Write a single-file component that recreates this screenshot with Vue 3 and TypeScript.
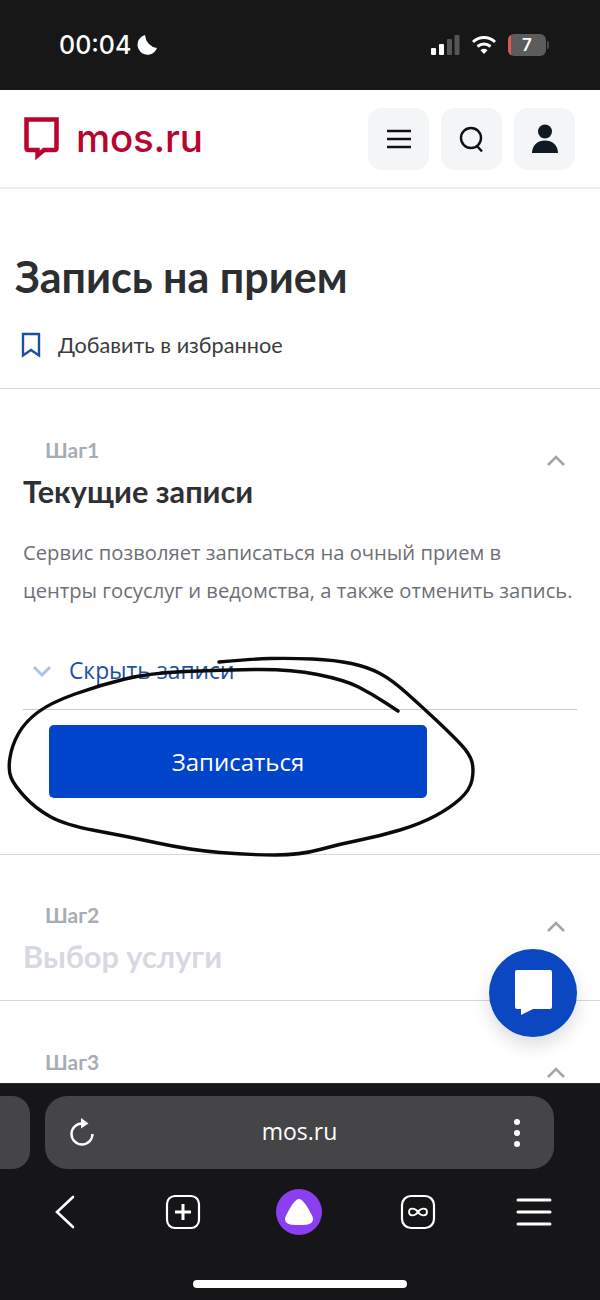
<script setup lang="ts">
// рукописная обводка вокруг кнопки
const strokePoints: [number, number][] = [
  [219, 662], [250, 659], [290, 658], [335, 660], [368, 667], [392, 680], [420, 705], [450, 733],
  [470, 754], [474, 770], [470, 790], [450, 808], [420, 824], [380, 836], [340, 844], [300, 855],
  [250, 855], [190, 850], [125, 836], [65, 825], [35, 808], [14, 785], [8, 770], [12, 745],
  [25, 722], [50, 703], [100, 685], [150, 673], [220, 670], [290, 669], [345, 680], [372, 694], [398, 711]
]

const buildStroke = (pts: [number, number][]) => {
  let d = `M${pts[0][0]} ${pts[0][1]}`
  for (let i = 1; i < pts.length - 1; i++) {
    const mx = (pts[i][0] + pts[i + 1][0]) / 2
    const my = (pts[i][1] + pts[i + 1][1]) / 2
    d += ` Q${pts[i][0]} ${pts[i][1]} ${mx} ${my}`
  }
  const last = pts[pts.length - 1]
  return `${d} L${last[0]} ${last[1]}`
}

const strokePath = buildStroke(strokePoints)
</script>

<template>
  <div class="screen">
    <div class="status-bar">
      <div class="status-left">
        <span class="clock">00:04</span>
        <svg class="moon" width="22" height="22" viewBox="0 0 22 22">
          <path d="M9 1 A10 10 0 1 0 21 14 A14 14 0 0 1 9 1Z" fill="#fff" />
        </svg>
      </div>
      <div class="status-right">
        <svg width="30" height="22" viewBox="0 0 30 22">
          <rect x="1" y="14" width="5" height="7" rx="1" fill="#fff" />
          <rect x="9" y="10" width="5" height="11" rx="1" fill="#fff" />
          <rect x="17" y="5" width="5" height="16" rx="1" fill="#555" />
          <rect x="24.500" y="1" width="5" height="20" rx="1" fill="#555" />
        </svg>
        <svg class="wifi" width="26" height="20" viewBox="0 0 26 20" fill="none" stroke="#fff" stroke-width="3">
          <path d="M2 7 A16 16 0 0 1 24 7" />
          <path d="M6.500 11.500 A10 10 0 0 1 19.500 11.500" />
          <path d="M13 19 L9.500 15.300 A5 5 0 0 1 16.500 15.300Z" fill="#fff" stroke="none" />
        </svg>
        <div class="battery">
          <span class="battery-level"></span>
          <span class="battery-num">7</span>
        </div>
        <span class="battery-tip"></span>
      </div>
    </div>

    <header class="site-header">
      <div class="logo">
        <svg width="35" height="44" viewBox="0 0 35 44">
          <path d="M2.500 2.500 H32.500 V31 Q32.500 33 30.500 33 H20 L13.500 38.500 V33 H4.500 Q2.500 33 2.500 31Z" fill="none" stroke="#b9042f" stroke-width="4.500" stroke-linejoin="miter" />
        </svg>
        <span class="logo-text">mos.ru</span>
      </div>
      <div class="header-actions">
        <button class="icon-btn">
          <svg width="26" height="22" viewBox="0 0 26 22" stroke="#111" stroke-width="2.600">
            <path d="M1 3 H25 M1 11 H25 M1 19 H25" />
          </svg>
        </button>
        <button class="icon-btn">
          <svg width="26" height="28" viewBox="0 0 26 28" fill="none" stroke="#111" stroke-width="2.400">
            <circle cx="12" cy="13" r="10" />
            <path d="M18 21 L23 26.500" />
          </svg>
        </button>
        <button class="icon-btn">
          <svg width="28" height="30" viewBox="0 0 28 30" fill="#111a24">
            <circle cx="14" cy="7.500" r="7" />
            <path d="M1 29 C1 21 7 16.500 14 16.500 C21 16.500 27 21 27 29Z" />
          </svg>
        </button>
      </div>
    </header>

    <main class="page">
      <h1 class="page-title">Запись на прием</h1>
      <div class="favorite">
        <svg width="20" height="26" viewBox="0 0 20 26" fill="none" stroke="#1d4f9f" stroke-width="2.400">
          <path d="M2 2 H18 V23.500 L10 18 L2 23.500Z" />
        </svg>
        <span>Добавить в избранное</span>
      </div>

      <section class="step step-first">
        <div class="step-label">Шаг1</div>
        <svg class="chevron" width="20" height="12" viewBox="0 0 20 12" fill="none" stroke="#a3a6aa" stroke-width="2.600">
          <path d="M2 11 L10 3 L18 11" />
        </svg>
        <h2 class="step-title">Текущие записи</h2>
        <p class="step-text">Сервис позволяет записаться на очный прием в<br />центры госуслуг и ведомства, а также отменить запись.</p>
        <div class="toggle">
          <svg width="20" height="12" viewBox="0 0 20 12" fill="none" stroke="#a9c3ea" stroke-width="3">
            <path d="M2 2 L10 10 L18 2" />
          </svg>
          <span>Скрыть записи</span>
        </div>
        <div class="records">
          <button class="primary">Записаться</button>
        </div>
      </section>

      <section class="step step-second">
        <div class="step-label">Шаг2</div>
        <svg class="chevron" width="20" height="12" viewBox="0 0 20 12" fill="none" stroke="#a3a6aa" stroke-width="2.600">
          <path d="M2 11 L10 3 L18 11" />
        </svg>
        <h2 class="step-title muted">Выбор услуги</h2>
      </section>

      <section class="step step-third">
        <div class="step-label">Шаг3</div>
        <svg class="chevron" width="20" height="12" viewBox="0 0 20 12" fill="none" stroke="#a3a6aa" stroke-width="2.600">
          <path d="M2 11 L10 3 L18 11" />
        </svg>
      </section>
    </main>

    <div class="browser-bar">
      <div class="url-row">
        <div class="prev-tab"></div>
        <div class="url-field">
          <svg width="28" height="32" viewBox="0 0 28 32" fill="none" stroke="#fff" stroke-width="2.400">
            <path d="M14 6.500 A10.500 10.500 0 1 0 24.500 17" />
            <path d="M13 1 L20.500 6.500 L13 11.500Z" fill="#fff" stroke="none" />
          </svg>
          <span class="url-text">mos.ru</span>
          <svg width="8" height="30" viewBox="0 0 8 30" fill="#fff">
            <circle cx="4" cy="4" r="3" />
            <circle cx="4" cy="15" r="3" />
            <circle cx="4" cy="26" r="3" />
          </svg>
        </div>
      </div>
      <nav class="browser-nav">
        <svg width="20" height="34" viewBox="0 0 20 34" fill="none" stroke="#fff" stroke-width="2.600" stroke-linecap="round">
          <path d="M18 2 L2 17 L18 32" />
        </svg>
        <svg class="nav-plus" width="36" height="36" viewBox="0 0 36 36" fill="none" stroke="#fff">
          <rect x="2" y="2" width="32" height="32" rx="8" stroke-width="2.200" />
          <path d="M18 10 V26 M10 18 H26" stroke-width="3" />
        </svg>
        <div class="alice">
          <svg width="30" height="26" viewBox="0 0 30 26" fill="#fff">
            <path d="M15 0 C18 0 21 4 25 11 C29 18 30 20 28 23 C26 26 20 26 15 26 C10 26 4 26 2 23 C0 20 1 18 5 11 C9 4 12 0 15 0Z" />
          </svg>
        </div>
        <svg class="nav-loop" width="36" height="36" viewBox="0 0 36 36" fill="none" stroke="#fff">
          <rect x="2" y="2" width="32" height="32" rx="9" stroke-width="2.200" />
          <path d="M18 18 C15 13.500 9 13.500 9 18 C9 22.500 15 22.500 18 18 C21 13.500 27 13.500 27 18 C27 22.500 21 22.500 18 18Z" stroke-width="1.800" />
        </svg>
        <svg class="nav-menu" width="36" height="28" viewBox="0 0 36 28" stroke="#fff" stroke-width="3" stroke-linecap="round">
          <path d="M2 2 H34 M2 14 H34 M2 26 H34" />
        </svg>
      </nav>
      <div class="home-indicator"></div>
    </div>

    <button class="chat-fab">
      <svg width="37" height="45" viewBox="0 0 37 45" fill="#fff">
        <path d="M2 0 H35 A2 2 0 0 1 37 2 V37 A2 2 0 0 1 35 39 H18 L6 45 V39 H2 A2 2 0 0 1 0 37 V2 A2 2 0 0 1 2 0Z" />
      </svg>
    </button>

    <svg class="scribble" width="600" height="1300" viewBox="0 0 600 1300" fill="none">
      <path :d="strokePath" stroke="#0b0b0b" stroke-width="3.400" stroke-linecap="round" stroke-linejoin="round" />
    </svg>
  </div>
</template>

<style scoped>
.screen {
  position: relative;
  display: flex;
  flex-direction: column;
  width: 600px;
  height: 1300px;
  overflow: hidden;
  background: #fff;
  font-family: Lato, "Open Sans", "Noto Sans", sans-serif;
}

.status-bar {
  flex: none;
  display: flex;
  justify-content: space-between;
  align-items: center;
  height: 90px;
  padding: 0 51px 0 59px;
  box-sizing: border-box;
  background: #171717;
  color: #fff;
}

.status-left {
  display: flex;
  align-items: center;
  gap: 5px;
}

.clock {
  font-family: Inter, Roboto, sans-serif;
  font-size: 25px;
  font-weight: 500;
}

.status-right {
  display: flex;
  align-items: center;
}

.wifi {
  margin-left: 11px;
}

.battery {
  position: relative;
  width: 38px;
  height: 22px;
  margin-left: 11px;
  border-radius: 6px;
  overflow: hidden;
  background: #5c5c5c;
  text-align: center;
  font-family: Inter, Roboto, sans-serif;
  font-size: 17px;
  font-weight: 600;
  line-height: 22px;
}

.battery-level {
  position: absolute;
  left: 0;
  top: 0;
  width: 3px;
  height: 100%;
  background: #e2544c;
}

.battery-num {
  position: relative;
}

.battery-tip {
  width: 2px;
  height: 8px;
  margin-left: 1px;
  border-radius: 0 2px 2px 0;
  background: #4a4a4a;
}

.site-header {
  flex: none;
  display: flex;
  justify-content: space-between;
  align-items: center;
  height: 99px;
  padding: 0 25px 0 24px;
  box-sizing: border-box;
  border-bottom: 2px solid #eceef0;
}

.logo {
  display: flex;
  align-items: center;
  gap: 17px;
}

.logo-text {
  font-family: Inter, Roboto, sans-serif;
  font-size: 38.500px;
  font-weight: 500;
  color: #b9042f;
  line-height: 1;
  letter-spacing: -0.2px;
}

.header-actions {
  display: flex;
  gap: 12px;
}

.icon-btn {
  display: flex;
  align-items: center;
  justify-content: center;
  width: 61px;
  height: 62px;
  padding: 0;
  border: 0;
  border-radius: 14px;
  background: #f4f5f7;
}

.page {
  flex: 1;
  min-height: 0;
  overflow: hidden;
}

.page-title {
  margin: 62px 0 0 15px;
  font-size: 43px;
  font-weight: 700;
  line-height: 52px;
  color: #2d2e31;
}

.favorite {
  display: flex;
  align-items: center;
  gap: 17px;
  margin: 28px 0 0 21px;
  font-size: 21.700px;
  line-height: 28px;
  color: #3a3c40;
}

.step {
  position: relative;
  padding: 0 23px;
  border-top: 1px solid #d5d7da;
}

.step-first {
  margin-top: 29px;
  padding-top: 48px;
}

.step-second {
  padding-top: 47px;
  padding-bottom: 24px;
}

.step-third {
  padding-top: 48px;
}

.step-label {
  padding-left: 22px;
  font-size: 21px;
  font-weight: 700;
  line-height: 26px;
  color: #a8acb3;
}

.chevron {
  position: absolute;
  right: 34px;
  top: 65px;
}

.step-third .chevron {
  top: 65px;
}

.step-title {
  margin: 10px 0 0;
  font-size: 30.700px;
  font-weight: 700;
  line-height: 38px;
  color: #2f3033;
}

.step-title.muted {
  margin-top: 10px;
  color: #d6d9df;
}

.step-text {
  margin: 22px 0 0;
  font-family: "Open Sans", "Noto Sans", sans-serif;
  font-size: 20.200px;
  line-height: 38px;
  white-space: nowrap;
  color: #6d7075;
}

.toggle {
  display: flex;
  align-items: center;
  gap: 17px;
  margin: 40px 0 0 9px;
  font-family: "Open Sans", "Noto Sans", sans-serif;
  font-size: 22.800px;
  line-height: 44px;
  color: #1f4fa3;
}

.records {
  margin-top: 16px;
  padding: 15px 150px 56px 26px;
  border-top: 1px solid #c9cbce;
}

.primary {
  display: block;
  width: 378px;
  height: 73px;
  border: 0;
  border-radius: 5px;
  background: #0044cc;
  font-family: "Open Sans", "Noto Sans", sans-serif;
  font-size: 24px;
  color: #fff;
}

.browser-bar {
  flex: none;
  position: relative;
  height: 217px;
  border-top: 1px solid #2c2c2c;
  background: #161618;
  box-sizing: border-box;
}

.url-row {
  display: flex;
  gap: 15px;
  margin-top: 12px;
  margin-right: 46px;
}

.prev-tab {
  width: 30px;
  height: 73px;
  border-radius: 0 18px 18px 0;
  background: #454547;
}

.url-field {
  flex: 1;
  display: flex;
  align-items: center;
  justify-content: space-between;
  height: 73px;
  padding: 0 33px 0 23px;
  border-radius: 22px;
  box-sizing: border-box;
  background: #454547;
}

.url-text {
  margin: 0 10px 4px 0;
  font-family: "Open Sans", "Noto Sans", sans-serif;
  font-size: 23px;
  color: #fff;
}

.browser-nav {
  display: flex;
  align-items: center;
  margin-top: 20px;
  padding-left: 55px;
}

.nav-plus {
  margin-left: 90px;
}

.alice {
  display: flex;
  align-items: center;
  justify-content: center;
  width: 46px;
  height: 46px;
  margin-left: 75px;
  border-radius: 50%;
  background: #8a3ff0;
}

.nav-loop {
  margin-left: 78px;
}

.nav-menu {
  margin-left: 80px;
}

.home-indicator {
  position: absolute;
  left: 193px;
  top: 196px;
  width: 214px;
  height: 8px;
  border-radius: 4px;
  background: #fff;
}

.chat-fab {
  position: absolute;
  left: 489px;
  top: 949px;
  display: flex;
  align-items: center;
  justify-content: center;
  width: 88px;
  height: 88px;
  padding: 0 0 2px;
  border: 0;
  border-radius: 50%;
  background: #0a47c0;
  box-shadow: 0 8px 18px rgba(0, 0, 0, 0.14);
}

.scribble {
  position: absolute;
  left: 0;
  top: 0;
  pointer-events: none;
}
</style>
